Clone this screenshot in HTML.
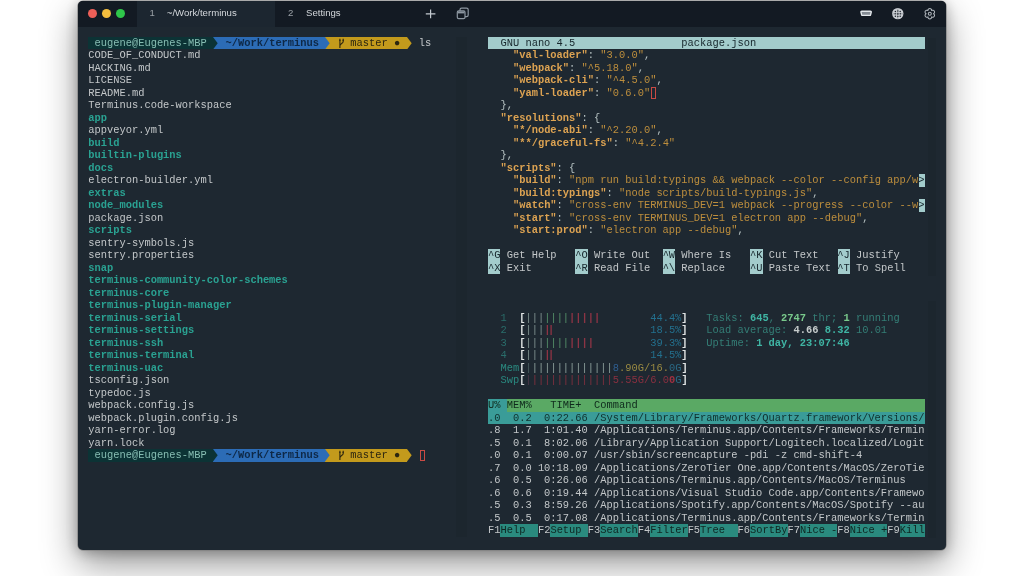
<!DOCTYPE html>
<html><head><meta charset="utf-8"><style>
html,body{margin:0;padding:0;width:1024px;height:576px;overflow:hidden;background:#fff;}
.win{position:absolute;left:78px;top:0.5px;width:868px;height:548.5px;border-radius:5px;background:#1e2831;overflow:hidden;
 box-shadow:0 0 0 0.6px rgba(120,120,120,0.9),0 14px 36px rgba(0,0,0,0.42),0 2px 14px rgba(0,0,0,0.28);}
.tb{position:absolute;left:0;top:0;width:868px;height:25.5px;background:#131a23;}
.tab1{position:absolute;left:59px;top:0;width:138px;height:25.5px;background:#1c2630;}
.tl{position:absolute;top:7.6px;width:9px;height:9px;border-radius:50%;}
.tt{position:absolute;top:5.4px;font:9.6px/14px "Liberation Sans",sans-serif;color:#d3d7db;white-space:pre;}
.b{position:absolute;height:12.5px;}
.a{position:absolute;display:block;}
.r{position:absolute;height:12.5px;font-family:"Liberation Mono",monospace;font-size:10.4px;line-height:12.5px;white-space:pre;}
.ic{position:absolute;}
</style></head><body>
<div class="win" style="will-change:transform">
<div class="tb"></div>
<div class="tab1"></div>
<div style="position:absolute;left:378px;top:35.5px;width:11px;height:500px;background:rgba(0,0,0,0.045)"></div>
<div style="position:absolute;left:850px;top:36.5px;width:8px;height:238px;background:rgba(0,0,0,0.045)"></div>
<div style="position:absolute;left:850px;top:299.5px;width:8px;height:237px;background:rgba(0,0,0,0.045)"></div>
<div class="tl" style="left:10px;background:#ee5f58"></div>
<div class="tl" style="left:24px;background:#f4be3e"></div>
<div class="tl" style="left:38px;background:#2fc74a"></div>
<div class="tt" style="left:71.5px;color:#9aa0a6">1</div>
<div class="tt" style="left:88.8px">~/Work/terminus</div>
<div class="tt" style="left:210px;color:#9aa0a6">2</div>
<div class="tt" style="left:228px">Settings</div>
<svg class="ic" style="left:0;top:0" width="868" height="26" viewBox="0 0 868 26">
 <path d="M347.8 12.9 H357.4 M352.6 8.5 V17.3" stroke="#c3c9cf" stroke-width="1.2" fill="none"/>
 <rect x="382.0" y="7.2" width="8.2" height="8.5" rx="1.6" fill="none" stroke="#8d97a1" stroke-width="1.2"/>
 <rect x="379.3" y="9.9" width="7.7" height="7.8" rx="1.4" fill="#131a23" stroke="#8d97a1" stroke-width="1.2"/>
 <rect x="379.8" y="10.4" width="6.7" height="2.0" fill="#8d97a1"/>
 <path d="M783.8 10.3 H792.4 Q793.4 10.3 793.2 11.3 L792.6 13.7 Q792.4 14.4 791.6 14.4 H784.6 Q783.8 14.4 783.6 13.7 L783.0 11.3 Q782.8 10.3 783.8 10.3 Z" fill="#858c94" stroke="#e4e8ec" stroke-width="1.4" stroke-linejoin="round"/>
 <circle cx="819.8" cy="12.6" r="5.7" fill="#c9cdd2"/>
 <g fill="#1b222a"><circle cx="817.4" cy="10.4" r="0.75"/><circle cx="819.8" cy="10.1" r="0.75"/><circle cx="822.2" cy="10.4" r="0.75"/>
 <circle cx="817.2" cy="12.8" r="0.75"/><circle cx="819.8" cy="12.8" r="0.85"/><circle cx="822.4" cy="12.8" r="0.75"/>
 <circle cx="817.4" cy="15.2" r="0.75"/><circle cx="819.8" cy="15.5" r="0.75"/><circle cx="822.2" cy="15.2" r="0.75"/></g>
 <path d="M819.8 7.5 V18.1 M814.5 12.8 H825.1" stroke="#5a6068" stroke-width="0.4"/>
 <path d="M849.96 9.51 A1.85 1.85 0 1 1 853.64 9.51 A1.85 1.85 0 1 1 855.49 12.70 A1.85 1.85 0 1 1 853.64 15.89 A1.85 1.85 0 1 1 849.96 15.89 A1.85 1.85 0 1 1 848.11 12.70 A1.85 1.85 0 1 1 849.96 9.51 Z" fill="none" stroke="#aeb4ba" stroke-width="1.05" stroke-linejoin="round"/>
 <circle cx="851.8" cy="12.7" r="1.5" fill="none" stroke="#aeb4ba" stroke-width="1.1"/>
</svg>
</div>
<div style="position:absolute;left:0;top:0;width:1024px;height:576px;will-change:transform;">
<div class="b" style="left:88.30px;top:36.50px;width:124.82px;background:#0c3335"></div><div class="b" style="left:219.36px;top:36.50px;width:106.10px;background:#2c6cb6"></div><div class="b" style="left:331.70px;top:36.50px;width:74.89px;background:#c39a1c"></div><div class="b" style="left:213.12px;top:36.50px;width:6.24px;background:#2c6cb6"></div><svg class="a" style="left:213.12px;top:36.50px" width="6.24" height="12.5" viewBox="0 0 6.24 12.5"><polygon points="0,0 4.7,6.250 0,12.5" fill="#0c3335"/></svg><div class="b" style="left:325.46px;top:36.50px;width:6.24px;background:#c39a1c"></div><svg class="a" style="left:325.46px;top:36.50px" width="6.24" height="12.5" viewBox="0 0 6.24 12.5"><polygon points="0,0 4.7,6.250 0,12.5" fill="#2c6cb6"/></svg><svg class="a" style="left:406.59px;top:36.50px" width="6.24" height="12.5" viewBox="0 0 6.24 12.5"><polygon points="0,0 4.7,6.250 0,12.5" fill="#c39a1c"/></svg><svg class="a" style="left:337.94px;top:36.50px" width="7" height="13" viewBox="0 0 7 13"><path d="M1.9 1.8 V11 M5.2 1.8 V4.6 C5.2 6.6 1.9 6.6 1.9 9" stroke="#2c2610" stroke-width="1.1" fill="none"/><path d="M1.2 3.4 H2.6 M4.5 3.4 H5.9" stroke="#2c2610" stroke-width="0.9"/></svg><div class="b" style="left:88.30px;top:449.00px;width:124.82px;background:#0c3335"></div><div class="b" style="left:219.36px;top:449.00px;width:106.10px;background:#2c6cb6"></div><div class="b" style="left:331.70px;top:449.00px;width:74.89px;background:#c39a1c"></div><div class="b" style="left:213.12px;top:449.00px;width:6.24px;background:#2c6cb6"></div><svg class="a" style="left:213.12px;top:449.00px" width="6.24" height="12.5" viewBox="0 0 6.24 12.5"><polygon points="0,0 4.7,6.250 0,12.5" fill="#0c3335"/></svg><div class="b" style="left:325.46px;top:449.00px;width:6.24px;background:#c39a1c"></div><svg class="a" style="left:325.46px;top:449.00px" width="6.24" height="12.5" viewBox="0 0 6.24 12.5"><polygon points="0,0 4.7,6.250 0,12.5" fill="#2c6cb6"/></svg><svg class="a" style="left:406.59px;top:449.00px" width="6.24" height="12.5" viewBox="0 0 6.24 12.5"><polygon points="0,0 4.7,6.250 0,12.5" fill="#c39a1c"/></svg><svg class="a" style="left:337.94px;top:449.00px" width="7" height="13" viewBox="0 0 7 13"><path d="M1.9 1.8 V11 M5.2 1.8 V4.6 C5.2 6.6 1.9 6.6 1.9 9" stroke="#2c2610" stroke-width="1.1" fill="none"/><path d="M1.2 3.4 H2.6 M4.5 3.4 H5.9" stroke="#2c2610" stroke-width="0.9"/></svg><div class="b" style="left:419.57px;top:449.50px;width:5.24px;height:11.50px;border:1px solid #c94a44;box-sizing:border-box;background:none"></div><div class="b" style="left:488.00px;top:36.50px;width:436.87px;background:#a3cccc"></div><div class="b" style="left:650.77px;top:87.00px;width:5.24px;height:11.50px;border:1px solid #c94a44;box-sizing:border-box;background:none"></div><div class="b" style="left:918.63px;top:174.00px;width:6.24px;background:#a3cccc"></div><div class="b" style="left:918.63px;top:199.00px;width:6.24px;background:#a3cccc"></div><div class="b" style="left:488.00px;top:249.00px;width:12.48px;background:#a3cccc"></div><div class="b" style="left:575.37px;top:249.00px;width:12.48px;background:#a3cccc"></div><div class="b" style="left:662.75px;top:249.00px;width:12.48px;background:#a3cccc"></div><div class="b" style="left:750.12px;top:249.00px;width:12.48px;background:#a3cccc"></div><div class="b" style="left:837.50px;top:249.00px;width:12.48px;background:#a3cccc"></div><div class="b" style="left:488.00px;top:261.50px;width:12.48px;background:#a3cccc"></div><div class="b" style="left:575.37px;top:261.50px;width:12.48px;background:#a3cccc"></div><div class="b" style="left:662.75px;top:261.50px;width:12.48px;background:#a3cccc"></div><div class="b" style="left:750.12px;top:261.50px;width:12.48px;background:#a3cccc"></div><div class="b" style="left:837.50px;top:261.50px;width:12.48px;background:#a3cccc"></div><div class="b" style="left:488.00px;top:399.00px;width:18.72px;background:#3a9c98"></div><div class="b" style="left:506.72px;top:399.00px;width:418.15px;background:#5aa964"></div><div class="b" style="left:488.00px;top:411.50px;width:436.87px;background:#3a9c98"></div><div class="b" style="left:500.48px;top:524.00px;width:37.45px;background:#2a8a7e"></div><div class="b" style="left:550.41px;top:524.00px;width:37.45px;background:#2a8a7e"></div><div class="b" style="left:600.34px;top:524.00px;width:37.45px;background:#2a8a7e"></div><div class="b" style="left:650.27px;top:524.00px;width:37.45px;background:#2a8a7e"></div><div class="b" style="left:700.19px;top:524.00px;width:37.45px;background:#2a8a7e"></div><div class="b" style="left:750.12px;top:524.00px;width:37.45px;background:#2a8a7e"></div><div class="b" style="left:800.05px;top:524.00px;width:37.45px;background:#2a8a7e"></div><div class="b" style="left:849.98px;top:524.00px;width:37.45px;background:#2a8a7e"></div><div class="b" style="left:899.91px;top:524.00px;width:24.96px;background:#2a8a7e"></div>
<div class="r" style="left:88.30px;top:36.50px"><span style="color:#86bdb2"> eugene@Eugenes-MBP </span><span style="color:#c3c7c9"> </span><span style="color:#0e2846;font-weight:bold"> ~/Work/terminus </span><span style="color:#c3c7c9"> </span><span style="color:#2c2610">   master ● </span><span style="color:#c3c7c9"> </span><span style="color:#c3c7c9"> ls</span></div><div class="r" style="left:88.30px;top:49.00px"><span style="color:#c3c7c9">CODE_OF_CONDUCT.md</span></div><div class="r" style="left:88.30px;top:61.50px"><span style="color:#c3c7c9">HACKING.md</span></div><div class="r" style="left:88.30px;top:74.00px"><span style="color:#c3c7c9">LICENSE</span></div><div class="r" style="left:88.30px;top:86.50px"><span style="color:#c3c7c9">README.md</span></div><div class="r" style="left:88.30px;top:99.00px"><span style="color:#c3c7c9">Terminus.code-workspace</span></div><div class="r" style="left:88.30px;top:111.50px"><span style="color:#2aa292;font-weight:bold">app</span></div><div class="r" style="left:88.30px;top:124.00px"><span style="color:#c3c7c9">appveyor.yml</span></div><div class="r" style="left:88.30px;top:136.50px"><span style="color:#2aa292;font-weight:bold">build</span></div><div class="r" style="left:88.30px;top:149.00px"><span style="color:#2aa292;font-weight:bold">builtin-plugins</span></div><div class="r" style="left:88.30px;top:161.50px"><span style="color:#2aa292;font-weight:bold">docs</span></div><div class="r" style="left:88.30px;top:174.00px"><span style="color:#c3c7c9">electron-builder.yml</span></div><div class="r" style="left:88.30px;top:186.50px"><span style="color:#2aa292;font-weight:bold">extras</span></div><div class="r" style="left:88.30px;top:199.00px"><span style="color:#2aa292;font-weight:bold">node_modules</span></div><div class="r" style="left:88.30px;top:211.50px"><span style="color:#c3c7c9">package.json</span></div><div class="r" style="left:88.30px;top:224.00px"><span style="color:#2aa292;font-weight:bold">scripts</span></div><div class="r" style="left:88.30px;top:236.50px"><span style="color:#c3c7c9">sentry-symbols.js</span></div><div class="r" style="left:88.30px;top:249.00px"><span style="color:#c3c7c9">sentry.properties</span></div><div class="r" style="left:88.30px;top:261.50px"><span style="color:#2aa292;font-weight:bold">snap</span></div><div class="r" style="left:88.30px;top:274.00px"><span style="color:#2aa292;font-weight:bold">terminus-community-color-schemes</span></div><div class="r" style="left:88.30px;top:286.50px"><span style="color:#2aa292;font-weight:bold">terminus-core</span></div><div class="r" style="left:88.30px;top:299.00px"><span style="color:#2aa292;font-weight:bold">terminus-plugin-manager</span></div><div class="r" style="left:88.30px;top:311.50px"><span style="color:#2aa292;font-weight:bold">terminus-serial</span></div><div class="r" style="left:88.30px;top:324.00px"><span style="color:#2aa292;font-weight:bold">terminus-settings</span></div><div class="r" style="left:88.30px;top:336.50px"><span style="color:#2aa292;font-weight:bold">terminus-ssh</span></div><div class="r" style="left:88.30px;top:349.00px"><span style="color:#2aa292;font-weight:bold">terminus-terminal</span></div><div class="r" style="left:88.30px;top:361.50px"><span style="color:#2aa292;font-weight:bold">terminus-uac</span></div><div class="r" style="left:88.30px;top:374.00px"><span style="color:#c3c7c9">tsconfig.json</span></div><div class="r" style="left:88.30px;top:386.50px"><span style="color:#c3c7c9">typedoc.js</span></div><div class="r" style="left:88.30px;top:399.00px"><span style="color:#c3c7c9">webpack.config.js</span></div><div class="r" style="left:88.30px;top:411.50px"><span style="color:#c3c7c9">webpack.plugin.config.js</span></div><div class="r" style="left:88.30px;top:424.00px"><span style="color:#c3c7c9">yarn-error.log</span></div><div class="r" style="left:88.30px;top:436.50px"><span style="color:#c3c7c9">yarn.lock</span></div><div class="r" style="left:88.30px;top:449.00px"><span style="color:#86bdb2"> eugene@Eugenes-MBP </span><span style="color:#c3c7c9"> </span><span style="color:#0e2846;font-weight:bold"> ~/Work/terminus </span><span style="color:#c3c7c9"> </span><span style="color:#2c2610">   master ● </span><span style="color:#c3c7c9"> </span><span style="color:#c3c7c9"> </span></div><div class="r" style="left:488.00px;top:36.50px"><span style="color:#16262c">  GNU nano 4.5                 package.json                           </span></div><div class="r" style="left:488.00px;top:49.00px"><span style="color:#c3c7c9">    </span><span style="color:#dda352;font-weight:bold">&quot;val-loader&quot;</span><span style="color:#b7c3c3">: </span><span style="color:#bd8e3d">&quot;3.0.0&quot;</span><span style="color:#b7c3c3">,</span></div><div class="r" style="left:488.00px;top:61.50px"><span style="color:#c3c7c9">    </span><span style="color:#dda352;font-weight:bold">&quot;webpack&quot;</span><span style="color:#b7c3c3">: </span><span style="color:#bd8e3d">&quot;^5.18.0&quot;</span><span style="color:#b7c3c3">,</span></div><div class="r" style="left:488.00px;top:74.00px"><span style="color:#c3c7c9">    </span><span style="color:#dda352;font-weight:bold">&quot;webpack-cli&quot;</span><span style="color:#b7c3c3">: </span><span style="color:#bd8e3d">&quot;^4.5.0&quot;</span><span style="color:#b7c3c3">,</span></div><div class="r" style="left:488.00px;top:86.50px"><span style="color:#c3c7c9">    </span><span style="color:#dda352;font-weight:bold">&quot;yaml-loader&quot;</span><span style="color:#b7c3c3">: </span><span style="color:#bd8e3d">&quot;0.6.0&quot;</span><span style="color:#b7c3c3"></span></div><div class="r" style="left:488.00px;top:99.00px"><span style="color:#b7c3c3">  },</span></div><div class="r" style="left:488.00px;top:111.50px"><span style="color:#c3c7c9">  </span><span style="color:#dda352;font-weight:bold">&quot;resolutions&quot;</span><span style="color:#b7c3c3">: </span><span style="color:#b7c3c3">{</span><span style="color:#b7c3c3"></span></div><div class="r" style="left:488.00px;top:124.00px"><span style="color:#c3c7c9">    </span><span style="color:#dda352;font-weight:bold">&quot;*/node-abi&quot;</span><span style="color:#b7c3c3">: </span><span style="color:#bd8e3d">&quot;^2.20.0&quot;</span><span style="color:#b7c3c3">,</span></div><div class="r" style="left:488.00px;top:136.50px"><span style="color:#c3c7c9">    </span><span style="color:#dda352;font-weight:bold">&quot;**/graceful-fs&quot;</span><span style="color:#b7c3c3">: </span><span style="color:#bd8e3d">&quot;^4.2.4&quot;</span><span style="color:#b7c3c3"></span></div><div class="r" style="left:488.00px;top:149.00px"><span style="color:#b7c3c3">  },</span></div><div class="r" style="left:488.00px;top:161.50px"><span style="color:#c3c7c9">  </span><span style="color:#dda352;font-weight:bold">&quot;scripts&quot;</span><span style="color:#b7c3c3">: </span><span style="color:#b7c3c3">{</span><span style="color:#b7c3c3"></span></div><div class="r" style="left:488.00px;top:174.00px"><span style="color:#c3c7c9">    </span><span style="color:#dda352;font-weight:bold">&quot;build&quot;</span><span style="color:#b7c3c3">: </span><span style="color:#bd8e3d">&quot;npm run build:typings &amp;&amp; webpack --color --config app/w</span><span style="color:#16262c">&gt;</span></div><div class="r" style="left:488.00px;top:186.50px"><span style="color:#c3c7c9">    </span><span style="color:#dda352;font-weight:bold">&quot;build:typings&quot;</span><span style="color:#b7c3c3">: </span><span style="color:#bd8e3d">&quot;node scripts/build-typings.js&quot;</span><span style="color:#b7c3c3">,</span></div><div class="r" style="left:488.00px;top:199.00px"><span style="color:#c3c7c9">    </span><span style="color:#dda352;font-weight:bold">&quot;watch&quot;</span><span style="color:#b7c3c3">: </span><span style="color:#bd8e3d">&quot;cross-env TERMINUS_DEV=1 webpack --progress --color --w</span><span style="color:#16262c">&gt;</span></div><div class="r" style="left:488.00px;top:211.50px"><span style="color:#c3c7c9">    </span><span style="color:#dda352;font-weight:bold">&quot;start&quot;</span><span style="color:#b7c3c3">: </span><span style="color:#bd8e3d">&quot;cross-env TERMINUS_DEV=1 electron app --debug&quot;</span><span style="color:#b7c3c3">,</span></div><div class="r" style="left:488.00px;top:224.00px"><span style="color:#c3c7c9">    </span><span style="color:#dda352;font-weight:bold">&quot;start:prod&quot;</span><span style="color:#b7c3c3">: </span><span style="color:#bd8e3d">&quot;electron app --debug&quot;</span><span style="color:#b7c3c3">,</span></div><div class="r" style="left:488.00px;top:249.00px"><span style="color:#16262c">^G</span><span style="color:#c3c7c9"> Get Help   </span><span style="color:#16262c">^O</span><span style="color:#c3c7c9"> Write Out  </span><span style="color:#16262c">^W</span><span style="color:#c3c7c9"> Where Is   </span><span style="color:#16262c">^K</span><span style="color:#c3c7c9"> Cut Text   </span><span style="color:#16262c">^J</span><span style="color:#c3c7c9"> Justify    </span></div><div class="r" style="left:488.00px;top:261.50px"><span style="color:#16262c">^X</span><span style="color:#c3c7c9"> Exit       </span><span style="color:#16262c">^R</span><span style="color:#c3c7c9"> Read File  </span><span style="color:#16262c">^\</span><span style="color:#c3c7c9"> Replace    </span><span style="color:#16262c">^U</span><span style="color:#c3c7c9"> Paste Text </span><span style="color:#16262c">^T</span><span style="color:#c3c7c9"> To Spell   </span></div><div class="r" style="left:488.00px;top:311.50px"><span style="color:#2a6e6b">  1  </span><span style="color:#e0e4e4;font-weight:bold">[</span><span style="color:#7f918f">|||</span><span style="color:#559169">||||</span><span style="color:#8c3444;font-weight:bold">|||||</span><span style="color:#23708e">        44.4%</span><span style="color:#e0e4e4;font-weight:bold">]</span></div><div class="r" style="left:488.00px;top:324.00px"><span style="color:#2a6e6b">  2  </span><span style="color:#e0e4e4;font-weight:bold">[</span><span style="color:#7f918f">|||</span><span style="color:#8c3444;font-weight:bold">|</span><span style="color:#23708e">                18.5%</span><span style="color:#e0e4e4;font-weight:bold">]</span></div><div class="r" style="left:488.00px;top:336.50px"><span style="color:#2a6e6b">  3  </span><span style="color:#e0e4e4;font-weight:bold">[</span><span style="color:#7f918f">|||</span><span style="color:#559169">||||</span><span style="color:#8c3444;font-weight:bold">||||</span><span style="color:#23708e">         39.3%</span><span style="color:#e0e4e4;font-weight:bold">]</span></div><div class="r" style="left:488.00px;top:349.00px"><span style="color:#2a6e6b">  4  </span><span style="color:#e0e4e4;font-weight:bold">[</span><span style="color:#7f918f">|||</span><span style="color:#8c3444;font-weight:bold">|</span><span style="color:#23708e">                14.5%</span><span style="color:#e0e4e4;font-weight:bold">]</span></div><div class="r" style="left:491.80px;top:324.00px"><span style="color:#8c3444;font-weight:bold">         |</span></div><div class="r" style="left:491.80px;top:349.00px"><span style="color:#8c3444;font-weight:bold">         |</span></div><div class="r" style="left:488.00px;top:361.50px"><span style="color:#2a8a80">  Mem</span><span style="color:#e0e4e4;font-weight:bold">[</span><span style="color:#4a5c60">|</span><span style="color:#8d9f9b">|||||||||||||</span><span style="color:#2f5f92">8</span><span style="color:#9a8a42">.90G/16.</span><span style="color:#2a6a86">0G</span><span style="color:#e0e4e4;font-weight:bold">]</span></div><div class="r" style="left:488.00px;top:374.00px"><span style="color:#2a8a80">  Swp</span><span style="color:#e0e4e4;font-weight:bold">[</span><span style="color:#4a3848">|</span><span style="color:#82303f">|||||||||||||</span><span style="color:#8a3040">5.55G/6.0</span><span style="color:#a03040;font-weight:bold">0</span><span style="color:#2a6a86">G</span><span style="color:#e0e4e4;font-weight:bold">]</span></div><div class="r" style="left:488.00px;top:311.50px"><span style="color:#347e76">                                   </span><span style="color:#347e76">Tasks: </span><span style="color:#3fb5a4;font-weight:bold">645</span><span style="color:#347e76">, </span><span style="color:#79c98c;font-weight:bold">2747</span><span style="color:#347e76"> thr; </span><span style="color:#79c98c;font-weight:bold">1</span><span style="color:#347e76"> running</span></div><div class="r" style="left:488.00px;top:324.00px"><span style="color:#347e76">                                   </span><span style="color:#347e76">Load average: </span><span style="color:#c6cccc;font-weight:bold">4.66 </span><span style="color:#3fb5a4;font-weight:bold">8.32 </span><span style="color:#347e76">10.01</span></div><div class="r" style="left:488.00px;top:336.50px"><span style="color:#347e76">                                   </span><span style="color:#347e76">Uptime: </span><span style="color:#3fb5a4;font-weight:bold">1 day, 23:07:46</span></div><div class="r" style="left:488.00px;top:399.00px"><span style="color:#0f2a1c">U% </span><span style="color:#0f2a1c">MEM%   TIME+  Command                                              </span></div><div class="r" style="left:488.00px;top:411.50px"><span style="color:#10302e">.0  0.2  0:22.66 /System/Library/Frameworks/Quartz.framework/Versions/</span></div><div class="r" style="left:488.00px;top:424.00px"><span style="color:#c3c7c9">.8  1.7  1:01.40 /Applications/Terminus.app/Contents/Frameworks/Termin</span></div><div class="r" style="left:488.00px;top:436.50px"><span style="color:#c3c7c9">.5  0.1  8:02.06 /Library/Application Support/Logitech.localized/Logit</span></div><div class="r" style="left:488.00px;top:449.00px"><span style="color:#c3c7c9">.0  0.1  0:00.07 /usr/sbin/screencapture -pdi -z cmd-shift-4</span></div><div class="r" style="left:488.00px;top:461.50px"><span style="color:#c3c7c9">.7  0.0 10:18.09 /Applications/ZeroTier One.app/Contents/MacOS/ZeroTie</span></div><div class="r" style="left:488.00px;top:474.00px"><span style="color:#c3c7c9">.6  0.5  0:26.06 /Applications/Terminus.app/Contents/MacOS/Terminus</span></div><div class="r" style="left:488.00px;top:486.50px"><span style="color:#c3c7c9">.6  0.6  0:19.44 /Applications/Visual Studio Code.app/Contents/Framewo</span></div><div class="r" style="left:488.00px;top:499.00px"><span style="color:#c3c7c9">.5  0.3  8:59.26 /Applications/Spotify.app/Contents/MacOS/Spotify --au</span></div><div class="r" style="left:488.00px;top:511.50px"><span style="color:#c3c7c9">.5  0.5  0:17.08 /Applications/Terminus.app/Contents/Frameworks/Termin</span></div><div class="r" style="left:488.00px;top:524.00px"><span style="color:#c3c7c9">F1</span><span style="color:#0f2622">Help  </span><span style="color:#c3c7c9">F2</span><span style="color:#0f2622">Setup </span><span style="color:#c3c7c9">F3</span><span style="color:#0f2622">Search</span><span style="color:#c3c7c9">F4</span><span style="color:#0f2622">Filter</span><span style="color:#c3c7c9">F5</span><span style="color:#0f2622">Tree  </span><span style="color:#c3c7c9">F6</span><span style="color:#0f2622">SortBy</span><span style="color:#c3c7c9">F7</span><span style="color:#0f2622">Nice -</span><span style="color:#c3c7c9">F8</span><span style="color:#0f2622">Nice +</span><span style="color:#c3c7c9">F9</span><span style="color:#0f2622">Kill</span></div>
</div>
</body></html>
